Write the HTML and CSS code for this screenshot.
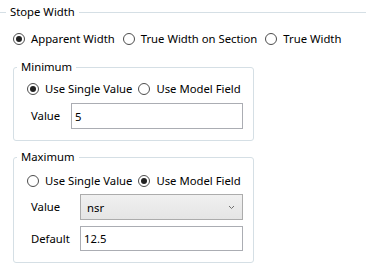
FILE: index.html
```html
<!DOCTYPE html>
<html>
<head>
<meta charset="utf-8">
<link rel="stylesheet" href="styles.css">
</head>
<body>
<div class="panel">
  <div class="header"><span class="hline-left"></span><span class="htitle">Stope Width</span><span class="hline"></span></div>
  <div class="radios top-radios">
    <label class="radio"><span class="dot checked"></span>Apparent Width</label>
    <label class="radio"><span class="dot"></span>True Width on Section</label>
    <label class="radio"><span class="dot"></span>True Width</label>
  </div>

  <fieldset class="group group-min">
    <legend>Minimum</legend>
    <div class="radios inner-radios">
      <label class="radio"><span class="dot checked"></span>Use Single Value</label>
      <label class="radio"><span class="dot"></span>Use Model Field</label>
    </div>
    <div class="form form-min">
      <span class="lbl">Value</span>
      <div class="input">5</div>
    </div>
  </fieldset>

  <fieldset class="group group-max">
    <legend>Maximum</legend>
    <div class="radios inner-radios">
      <label class="radio"><span class="dot"></span>Use Single Value</label>
      <label class="radio"><span class="dot checked"></span>Use Model Field</label>
    </div>
    <div class="form form-max">
      <span class="lbl">Value</span>
      <div class="combo"><span>nsr</span><svg class="chev" width="7" height="5" viewBox="0 0 7 5"><path d="M1 1 L3.5 3.5 L6 1" fill="none" stroke="#707070" stroke-width="1"/></svg></div>
      <span class="lbl">Default</span>
      <div class="input">12.5</div>
    </div>
  </fieldset>
</div>
</body>
</html>
```

FILE: styles.css
```css
html, body {
  margin: 0;
  padding: 0;
  background: #ffffff;
}
body {
  font-family: "Noto Sans", "Open Sans", sans-serif;
  font-size: 11.3px;
  color: #000;
  width: 366px;
  height: 266px;
  overflow: hidden;
}
.panel {
  display: flex;
  flex-direction: column;
}
.header {
  display: flex;
  align-items: center;
  height: 24px;
}
.hline-left {
  width: 6px;
  height: 1px;
  background: #d5dfe5;
}
.htitle {
  padding: 0 4px;
  line-height: 16px;
}
.hline {
  flex: 1;
  height: 1px;
  background: #d5dfe5;
}
.radios {
  display: flex;
  align-items: center;
  height: 16px;
}
.top-radios {
  margin: 7px 0 0 13px;
  gap: 8px;
}
.radio {
  display: flex;
  align-items: center;
  gap: 6px;
  line-height: 16px;
  white-space: nowrap;
}
.dot {
  box-sizing: border-box;
  width: 12px;
  height: 12px;
  border: 1px solid #4d4d4d;
  border-radius: 50%;
  display: flex;
  align-items: center;
  justify-content: center;
  background: #fff;
}
.dot.checked::after {
  content: "";
  width: 6px;
  height: 6px;
  border-radius: 50%;
  background: #222;
}
.group {
  box-sizing: border-box;
  width: 241px;
  margin: 0 0 0 13px;
  padding: 0 10px 11px 0;
  border: 1px solid #d5dfe5;
  border-radius: 3px;
  min-width: 0;
}
.group legend {
  margin-left: 3px;
  padding: 0 4px;
  line-height: 16px;
  height: 16px;
}
.group-min {
  margin-top: 12px;
}
.group-max {
  margin-top: 8px;
}
.inner-radios {
  margin: 6px 0 0 13px;
  gap: 6px;
}
.group-max .inner-radios {
  margin-top: 8px;
}
.form {
  display: grid;
  align-items: center;
  padding-left: 17px;
  row-gap: 6px;
  margin-top: 6px;
}
.form-min {
  grid-template-columns: 40px 1fr;
}
.form-max {
  grid-template-columns: 49px 1fr;
  margin-top: 5px;
}
.lbl {
  line-height: 16px;
}
.input {
  box-sizing: border-box;
  height: 26px;
  border: 1px solid #abadb3;
  padding: 0 3px;
  display: flex;
  align-items: center;
  background: #fff;
}
.form-max .input {
  height: 25px;
}
.combo {
  box-sizing: border-box;
  height: 26px;
  border: 1px solid #acacac;
  background: linear-gradient(#f0f0f0, #e5e5e5);
  display: flex;
  align-items: center;
  justify-content: space-between;
  padding: 0 7px 0 6px;
}
.chev {
  display: block;
}
```
